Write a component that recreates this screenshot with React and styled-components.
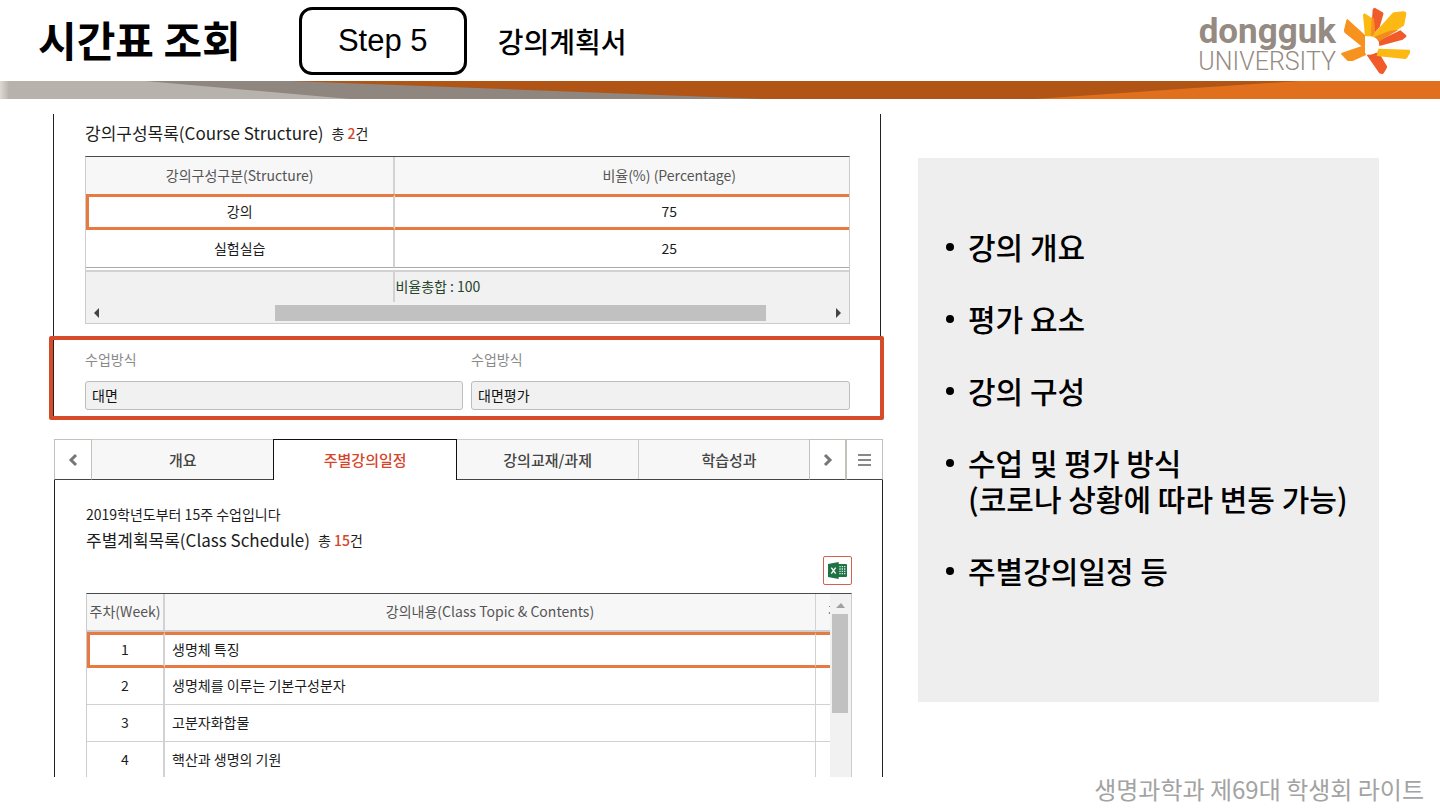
import React from "react";
import styled, { createGlobalStyle } from "styled-components";

const GlobalStyle = createGlobalStyle`
  *, *::before, *::after { box-sizing: border-box; }
  body {
    margin: 0;
    background: #fff;
    color: #1c1c1c;
    font-family: "Noto Sans CJK KR", "Noto Sans", sans-serif;
    font-size: 14px;
    line-height: 20px;
  }
  button, input { font: inherit; }
`;

const Header = styled.header`
  display: flex;
  align-items: center;
  height: 81px;
  padding: 0 29px 0 38px;
  color: #000;
`;

const Title = styled.h1`
  margin: 0;
  padding-bottom: 4px;
  font-size: 42px;
  line-height: 60px;
  font-weight: 700;
  white-space: nowrap;
`;

const StepBox = styled.div`
  display: flex;
  align-items: center;
  justify-content: center;
  width: 168px;
  height: 68px;
  margin: 0 31px 0 58px;
  border: 3px solid #000;
  border-radius: 13px;
  font-family: "Liberation Sans", Arial, sans-serif;
  font-size: 31px;
`;

const Subtitle = styled.h2`
  margin: 0;
  font-size: 28px;
  line-height: 40px;
  font-weight: 500;
  white-space: nowrap;
`;

const Logo = styled.div`
  display: flex;
  align-items: center;
  gap: 4px;
  margin-left: auto;
  color: #958b82;
`;

const LogoWords = styled.div`
  display: flex;
  flex-direction: column;
  align-items: flex-end;
  padding-top: 8px;
`;

const LogoName = styled.span`
  font-family: Roboto, sans-serif;
  font-size: 35px;
  line-height: 33px;
  font-weight: 700;
`;

const LogoKind = styled.span`
  font-family: Roboto, sans-serif;
  font-size: 25px;
  line-height: 27px;
  font-weight: 300;
`;

const Ribbon = styled.svg`
  display: block;
  width: 100%;
  height: 18px;
`;

const Main = styled.main`
  display: grid;
  grid-template-columns: 835fr 461fr;
  gap: 34px;
  align-items: start;
  padding: 15px 61px 0 49px;
`;

const Capture = styled.div`
  min-width: 0;
`;

const StructurePanel = styled.section`
  margin: 0 3px 0 4px;
  padding: 5px 30px 12px 31px;
  border: solid #222;
  border-width: 0 1px;
`;

const ListTitle = styled.h3`
  display: flex;
  align-items: center;
  gap: 8px;
  margin: 0;
  font-size: 17px;
  line-height: 28px;
  font-weight: 400;
`;

const Count = styled.span`
  font-size: 14px;
  font-weight: 400;

  strong { color: #d5452b; font-weight: 500; }
`;

const GridBox = styled.div`
  margin-top: ${(p) => p.$top}px;
  border: 1px solid #ccc;
  border-top-color: #4a4a4a;
  border-bottom-width: ${(p) => (p.$open ? 0 : 1)}px;
  overflow: hidden;
`;

const GridTable = styled.table`
  width: ${(p) => (p.$extra ? `calc(100% + ${p.$extra}px)` : "100%")};
  border-collapse: separate;
  border-spacing: 0;
  table-layout: fixed;
`;

const HeadCell = styled.th`
  height: ${(p) => p.$height}px;
  padding: 0 0 2px;
  background: #f7f7f7;
  border-right: ${(p) => p.$rule || 0}px solid #d2d2d2;
  border-bottom: ${(p) => p.$under || 0}px solid #ccc;
  color: #555;
  font-weight: 400;
  white-space: nowrap;
`;

const Cell = styled.td`
  height: ${(p) => p.$height || 37}px;
  padding: 0 0 2px ${(p) => (p.$left ? 7 : 0)}px;
  border: 0 solid #d2d2d2;
  border-right-width: ${(p) => p.$rule || 0}px;
  border-bottom-width: ${(p) => (p.$line ? 1 : 0)}px;
  border-bottom-color: ${(p) => p.$line};
  text-align: ${(p) => (p.$left ? "left" : "center")};
  white-space: nowrap;
`;

const SelectedRow = styled.tr`
  ${Cell} {
    height: 36px;
    border-top: 3px solid #e67a40;
    border-bottom: 3px solid #e67a40;
  }
  ${Cell}:first-child {
    padding-right: 3px;
    border-left: 3px solid #e67a40;
  }
`;

const SpacerCell = styled.td`
  height: 2px;
  padding: 0;
`;

const TotalCell = styled.td`
  height: 32px;
  padding: 0 0 2px;
  background: #f1f1f1;
  border-top: 2px solid #d2d2d2;
  border-right: ${(p) => p.$rule || 0}px solid #d2d2d2;
  color: #24442c;
`;

const HorizontalBar = styled.div`
  display: grid;
  grid-template-columns: 189fr 491fr 83fr;
  align-items: center;
  height: 21px;
  background: #f1f1f1;
`;

const BarEnd = styled.div`
  display: flex;
  justify-content: ${(p) => (p.$right ? "flex-end" : "flex-start")};
  padding: 0 8px;
`;

const HorizontalThumb = styled.div`
  height: 16px;
  background: #c1c1c1;
`;

const Highlight = styled.section`
  border: 4px solid #d64b2a;
  border-radius: 2px;
`;

const Fields = styled.div`
  display: grid;
  grid-template-columns: 378fr 379fr;
  gap: 8px;
  padding: 9px 30px 6px 31px;
  border-left: 1px solid #222;
`;

const Field = styled.label`
  display: flex;
  flex-direction: column;
  gap: 12px;
  color: #8a8a8a;
`;

const FieldInput = styled.input`
  width: 100%;
  height: 29px;
  padding: 0 6px 2px;
  border: 1px solid #bdbdbd;
  border-radius: 3px;
  background: #f1f1f1;
  color: #111;
  outline: none;
`;

const TabBar = styled.div`
  display: flex;
  height: 41px;
  margin: 19px 1px 0 5px;
`;

const TabStrip = styled.div`
  display: flex;
  flex: 1;
  min-width: 0;
  overflow: hidden;
`;

const Tab = styled.button`
  flex: 0 0 ${(p) => (p.$active ? "25.6%" : "25.3%")};
  padding: ${(p) => (p.$active ? "0 0 1px" : "0")};
  border: 1px solid;
  border-width: ${(p) => (p.$active ? "1px 1px 0" : "1px 0 1px 0")};
  border-color: ${(p) => (p.$active ? "#111" : "#ccc transparent #444")};
  box-shadow: ${(p) => (p.$ruled ? "inset 1px 0 #ccc" : "none")};
  background: ${(p) => (p.$active ? "#fff" : "#f7f7f7")};
  color: ${(p) => (p.$active ? "#d5452b" : "#444")};
  font-size: 15px;
  font-weight: 500;
`;

const TabControl = styled.button`
  display: flex;
  align-items: center;
  justify-content: center;
  flex: 0 0 ${(p) => (p.$wide ? 38 : 37)}px;
  padding: 0;
  border: 1px solid #c4c0ba;
  border-bottom-color: #444;
  background: #fff;
`;

const SchedulePanel = styled.section`
  margin: 0 1px 0 5px;
  padding: 24px 30px 0 31px;
  border: solid #222;
  border-width: 0 1px;
`;

const Note = styled.p`
  margin: 0 0 2px;
`;

const Tools = styled.div`
  display: flex;
  justify-content: flex-end;
  margin-top: 2px;
`;

const ExcelButton = styled.button`
  display: flex;
  align-items: center;
  justify-content: center;
  width: 29px;
  height: 29px;
  padding: 0;
  border: 1px solid #d4604f;
  border-radius: 2px;
  background: #fff;
`;

const ScrollArea = styled.div`
  display: flex;
`;

const TableClip = styled.div`
  flex: 1;
  min-width: 0;
  overflow: hidden;
`;

const ClippedHead = styled(HeadCell)`
  padding-left: 12px;
  text-align: left;
  overflow: hidden;
`;

const VerticalBar = styled.div`
  display: flex;
  flex-direction: column;
  align-items: center;
  gap: 6px;
  width: 21px;
  padding: 9px 1px 0 0;
  background: #f1f1f1;
`;

const VerticalThumb = styled.div`
  width: 16px;
  height: 99px;
  background: #c1c1c1;
`;

const Summary = styled.aside`
  margin-top: 44px;
  padding: 70px 0 114px 28px;
  background: #eee;
  color: #000;
`;

const SummaryList = styled.ul`
  display: flex;
  flex-direction: column;
  gap: 36px;
  margin: 0;
  padding: 0;
  list-style: none;
`;

const SummaryItem = styled.li`
  display: flex;
  gap: 14px;
  font-size: 30px;
  line-height: 36px;
  font-weight: 500;
  white-space: nowrap;

  &::before {
    content: "";
    flex: none;
    width: 8px;
    height: 8px;
    margin-top: 15px;
    border-radius: 50%;
    background: #000;
  }
`;

const Footer = styled.footer`
  padding: 0 16px 6px;
  color: #a3a3a3;
  font-size: 24px;
  line-height: 24px;
  text-align: right;
`;

const structure = [
  { name: "강의", share: 75 },
  { name: "실험실습", share: 25 },
];

const weeks = [
  "생명체 특징",
  "생명체를 이루는 기본구성분자",
  "고분자화합물",
  "핵산과 생명의 기원",
];

function FlowerMark() {
  return (
    <svg width="71" height="68" viewBox="480 24 213 204" aria-hidden="true">
      <path fill="#f7921e" d="M503 61 555 108V143L548 145 494 101Q491 97 492 93L499 64Q500 60 503 61Z" />
      <path fill="#f7921e" d="M484 162 554 138 558 168 518 186H506Q502 186 500 183L483 165Z" />
      <path fill="#f15a29" d="M560 168 596 160 621 202Q622 205 620 208L611 223Q609 226 605 225L598 223Z" />
      <path fill="#fdb913" d="M594 149 687 152Q690 152 690 156V162L681 177Q679 180 675 180L590 171Z" />
      <path fill="#fdb913" d="M571 116 637 43Q639 40 643 40L670 37Q679 37 679 45L673 76Q673 80 669 82L594 128Z" />
      <path fill="#f15a29" d="M596 125 661 94 678 108Q681 111 678 114L668 122 598 141Z" />
      <path fill="#f28a1f" d="M576 116 630 95 656 92 596 128Z" />
      <path fill="#f15a29" d="M584 26 608 40Q611 42 610 46L599 84 572 114 578 32Q579 27 584 26Z" />
      <path fill="#fdb913" d="M554 43 572 55 582 60 584 104 573 116 555 112 549 49Q549 44 554 43Z" />
      <path fill="#f7921e" d="M575 56 582 60 584 104 572 115Z" />
      <path fill="#fff" d="M555 112H572Q597 115 597 139T572 167L555 163Z" />
    </svg>
  );
}

function ExcelIcon() {
  return (
    <svg width="19" height="17" viewBox="0 0 57 51" aria-hidden="true">
      <path fill="#1f7244" d="M30 6H54Q57 6 57 9V42Q57 45 54 45H30Z" />
      <path fill="none" stroke="#dcebe2" strokeWidth="4" strokeDasharray="4 3" d="M36 12V40M43 12V40M50 12V40" />
      <path fill="#1f7244" d="M0 6 32 0V51L0 45Z" />
      <path stroke="#fff" strokeWidth="4" d="M10 17 23 35M23 17 10 35" />
    </svg>
  );
}

function Chevron({ d }) {
  return (
    <svg width="10" height="14" viewBox="0 0 10 14" fill="none" stroke="#777" strokeWidth="3" aria-hidden="true">
      <path d={d} />
    </svg>
  );
}

export default function App() {
  return (
    <>
      <GlobalStyle />
      <Header>
        <Title>시간표 조회</Title>
        <StepBox>Step 5</StepBox>
        <Subtitle>강의계획서</Subtitle>
        <Logo>
          <LogoWords>
            <LogoName>dongguk</LogoName>
            <LogoKind>UNIVERSITY</LogoKind>
          </LogoWords>
          <FlowerMark />
        </Logo>
      </Header>
      <Ribbon viewBox="0 0 1440 18" preserveAspectRatio="none" aria-hidden="true">
        <defs>
          <linearGradient id="edge">
            <stop offset="0" stopColor="#dedad3" />
            <stop offset="1" stopColor="#b8b2ad" />
          </linearGradient>
        </defs>
        <path fill="#b8b2ad" d="M0 0H1440V18H0Z" />
        <path fill="url(#edge)" d="M0 0H9V18H0Z" />
        <path fill="#8f877f" d="M145 0H1440V18H350Z" />
        <path fill="#b05516" d="M290 0H1440V18H765Z" />
        <path fill="#e0701e" d="M1300 0H1440V18H1035L1180 8Z" />
      </Ribbon>

      <Main>
        <Capture>
          <StructurePanel>
            <ListTitle>
              강의구성목록(Course Structure)
              <Count>총 <strong>2</strong>건</Count>
            </ListTitle>
            <GridBox $top={9}>
              <GridTable $extra={94}>
                <colgroup>
                  <col style={{ width: "36.1%" }} />
                  <col />
                </colgroup>
                <thead>
                  <tr>
                    <HeadCell $height={37} $rule={2}>강의구성구분(Structure)</HeadCell>
                    <HeadCell $height={37}>비율(%) (Percentage)</HeadCell>
                  </tr>
                </thead>
                <tbody>
                  <SelectedRow>
                    <Cell $rule={2}>{structure[0].name}</Cell>
                    <Cell>{structure[0].share}</Cell>
                  </SelectedRow>
                  <tr>
                    <Cell $height={38} $rule={2} $line="#aaa">{structure[1].name}</Cell>
                    <Cell $height={38} $line="#aaa">{structure[1].share}</Cell>
                  </tr>
                </tbody>
                <tfoot>
                  <tr><SpacerCell colSpan={2} /></tr>
                  <tr>
                    <TotalCell $rule={2} />
                    <TotalCell>비율총합 : 100</TotalCell>
                  </tr>
                </tfoot>
              </GridTable>
              <HorizontalBar>
                <BarEnd>
                  <svg width="5" height="10" viewBox="0 0 5 10" aria-hidden="true"><path fill="#444" d="M5 0V10L0 5Z" /></svg>
                </BarEnd>
                <HorizontalThumb />
                <BarEnd $right>
                  <svg width="5" height="10" viewBox="0 0 5 10" aria-hidden="true"><path fill="#444" d="M0 0V10L5 5Z" /></svg>
                </BarEnd>
              </HorizontalBar>
            </GridBox>
          </StructurePanel>

          <Highlight>
            <Fields>
              <Field>
                수업방식
                <FieldInput readOnly value="대면" />
              </Field>
              <Field>
                수업방식
                <FieldInput readOnly value="대면평가" />
              </Field>
            </Fields>
          </Highlight>

          <TabBar>
            <TabControl aria-label="이전" $wide><Chevron d="M8 2 3 7 8 12" /></TabControl>
            <TabStrip role="tablist">
              <Tab role="tab">개요</Tab>
              <Tab role="tab" aria-selected="true" $active>주별강의일정</Tab>
              <Tab role="tab">강의교재/과제</Tab>
              <Tab role="tab" $ruled>학습성과</Tab>
            </TabStrip>
            <TabControl aria-label="다음"><Chevron d="M2 2 7 7 2 12" /></TabControl>
            <TabControl aria-label="전체 메뉴">
              <svg width="13" height="13" viewBox="0 0 13 13" stroke="#888" strokeWidth="2" aria-hidden="true">
                <path d="M0 2H13M0 7H13M0 12H13" />
              </svg>
            </TabControl>
          </TabBar>

          <SchedulePanel>
            <Note>2019학년도부터 15주 수업입니다</Note>
            <ListTitle>
              주별계획목록(Class Schedule)
              <Count>총 <strong>15</strong>건</Count>
            </ListTitle>
            <Tools>
              <ExcelButton aria-label="엑셀 다운로드"><ExcelIcon /></ExcelButton>
            </Tools>
            <GridBox $top={8} $open>
              <ScrollArea>
                <TableClip>
                  <GridTable>
                    <colgroup>
                      <col style={{ width: "78px" }} />
                      <col />
                      <col style={{ width: "14px" }} />
                    </colgroup>
                    <thead>
                      <tr>
                        <HeadCell $height={38} $rule={2} $under={2}>주차(Week)</HeadCell>
                        <HeadCell $height={38} $rule={1} $under={2}>강의내용(Class Topic &amp; Contents)</HeadCell>
                        <ClippedHead $height={38} $under={2}>강</ClippedHead>
                      </tr>
                    </thead>
                    <tbody>
                      {weeks.map((topic, i) => {
                        const Row = i === 0 ? SelectedRow : "tr";
                        const last = i === weeks.length - 1;
                        const look = { $height: last ? 35 : 37, $line: last ? undefined : "#d2d2d2" };
                        return (
                          <Row key={topic}>
                            <Cell {...look} $rule={2}>{i + 1}</Cell>
                            <Cell {...look} $rule={1} $left>{topic}</Cell>
                            <Cell {...look} />
                          </Row>
                        );
                      })}
                    </tbody>
                  </GridTable>
                </TableClip>
                <VerticalBar>
                  <svg width="9" height="5" viewBox="0 0 9 5" aria-hidden="true"><path fill="#a0a0a0" d="M0 5H9L5 0Z" /></svg>
                  <VerticalThumb />
                </VerticalBar>
              </ScrollArea>
            </GridBox>
          </SchedulePanel>
        </Capture>

        <Summary>
          <SummaryList>
            <SummaryItem>강의 개요</SummaryItem>
            <SummaryItem>평가 요소</SummaryItem>
            <SummaryItem>강의 구성</SummaryItem>
            <SummaryItem>
              <span>수업 및 평가 방식<br />(코로나 상황에 따라 변동 가능)</span>
            </SummaryItem>
            <SummaryItem>주별강의일정 등</SummaryItem>
          </SummaryList>
        </Summary>
      </Main>
      <Footer>생명과학과 제69대 학생회 라이트</Footer>
    </>
  );
}
